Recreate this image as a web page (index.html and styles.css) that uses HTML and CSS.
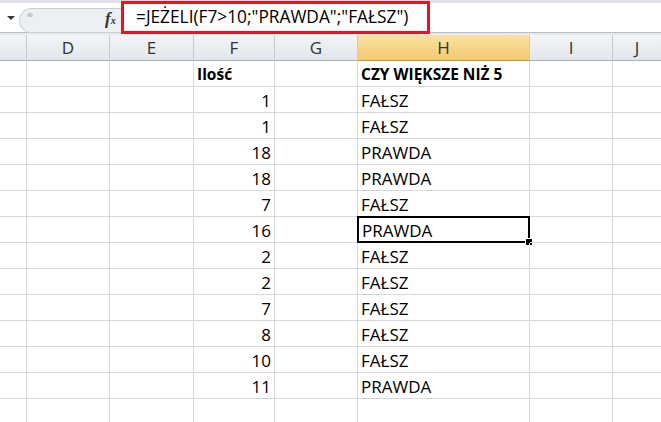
FILE: index.html
```html
<!DOCTYPE html>
<html lang="pl">
<head>
    <meta charset="UTF-8">
    <title>Arkusz</title>
    <link rel="stylesheet" href="styles.css">
</head>
<body>
    <div class="topstrip"></div>
    <div class="formulabar">
        <div class="namebox"><span class="arrow"></span></div>
        <div class="grip">
            <span class="dot"></span>
            <span class="fx"><i>f</i><small>x</small></span>
        </div>
        <div class="formula">=JEŻELI(F7&gt;10;"PRAWDA";"FAŁSZ")</div>
        <div class="rest"></div>
    </div>
    <div class="sep"></div>
    <div class="sheet" id="sheet">
        <div class="hd"></div>
        <div class="hd">D</div>
        <div class="hd">E</div>
        <div class="hd">F</div>
        <div class="hd">G</div>
        <div class="hd sel">H</div>
        <div class="hd">I</div>
        <div class="hd last">J</div>
    </div>
    <script>
        var data = [
            ["Ilość", "CZY WIĘKSZE NIŻ 5", true],
            ["1", "FAŁSZ"], ["1", "FAŁSZ"], ["18", "PRAWDA"], ["18", "PRAWDA"],
            ["7", "FAŁSZ"], ["16", "PRAWDA"], ["2", "FAŁSZ"], ["2", "FAŁSZ"],
            ["7", "FAŁSZ"], ["8", "FAŁSZ"], ["10", "FAŁSZ"], ["11", "PRAWDA"],
            ["", ""]
        ];
        var sheet = document.getElementById("sheet");
        for (var i = 0; i < data.length; i++) {
            var r = data[i];
            var cells = ["", "", "", r[0], "", r[1], "", ""];
            for (var c = 0; c < cells.length; c++) {
                var d = document.createElement("div");
                d.className = "cell";
                if (c == 7) d.className += " last";
                if (r[2]) d.className += " bold";
                else if (c == 3) d.className += " num";
                if (i == 6 && c == 5) {
                    d.className += " active";
                    var h = document.createElement("span");
                    h.className = "handle";
                    d.appendChild(h);
                }
                d.appendChild(document.createTextNode(cells[c]));
                sheet.appendChild(d);
            }
        }
    </script>
</body>
</html>
```

FILE: styles.css
```css
body {
    margin: 0;
    width: 661px;
    height: 422px;
    overflow: hidden;
    background: #fff;
    font-family: "Open Sans", "Noto Sans", sans-serif;
    color: #000;
}

.topstrip {
    height: 3px;
    background: #dfe3e8;
}

.formulabar {
    display: flex;
    height: 29px;
    background: #fff;
}

.namebox {
    width: 19px;
    display: flex;
    align-items: center;
    justify-content: center;
}

.arrow {
    width: 0;
    height: 0;
    margin-left: 3px;
    border-left: 4px solid transparent;
    border-right: 4px solid transparent;
    border-top: 4px solid #333;
}

.grip {
    position: relative;
    width: 102px;
    margin-top: 5px;
    height: 25px;
    background: #edf0f3;
    border: 1px solid #c9ced5;
    border-right: none;
    border-radius: 13px 0 0 13px;
    box-sizing: border-box;
}

.dot {
    position: absolute;
    left: 7px;
    top: 4px;
    width: 6px;
    height: 4px;
    border-radius: 3px;
    background: #c5cad1;
}

.fx {
    position: absolute;
    left: 85px;
    top: 0;
    font-family: "Liberation Serif", serif;
    font-size: 17px;
    font-weight: bold;
    color: #333;
}

.fx small {
    font-size: 10px;
    font-style: italic;
}

.formula {
    width: 309px;
    height: 33px;
    margin-top: -2px;
    border: 3px solid #e3161e;
    box-sizing: border-box;
    padding-left: 12px;
    font-size: 17.3px;
    line-height: 26px;
    white-space: nowrap;
    position: relative;
    z-index: 1;
}

.rest {
    flex: 1;
}

.sep {
    height: 3px;
    border-top: 1px solid #b9bec6;
    background: #e6e9ed;
    box-sizing: border-box;
}

.sheet {
    display: grid;
    grid-template-columns: 27px 83px 84px 81px 83px 172px 83px 1fr;
    grid-auto-rows: 26px;
}

.hd {
    height: 26px;
    background: linear-gradient(#f3f5f7, #e2e6eb);
    border-right: 1px solid #c6cbd1;
    border-bottom: 1px solid #a9b0b9;
    box-sizing: border-box;
    text-align: center;
    font-size: 17px;
    line-height: 26px;
    color: #333;
}

.hd.sel {
    background: linear-gradient(#fbe3a3, #f3c96e);
    border-bottom-color: #c29a45;
}

.hd.last, .cell.last {
    border-right: none;
}

.cell {
    position: relative;
    border-right: 1px solid #d8d8d8;
    border-bottom: 1px solid #d8d8d8;
    box-sizing: border-box;
    padding: 0 3px 0 3px;
    font-size: 17px;
    line-height: 27px;
    white-space: nowrap;
}

.bold {
    font-weight: bold;
    font-size: 15.5px;
}

.num {
    text-align: right;
}

.active {
    border: 2px solid #000;
    margin: -1px 0 0 -1px;
    padding-left: 3px;
    line-height: 25px;
}

.handle {
    position: absolute;
    right: -5px;
    bottom: -5px;
    width: 6px;
    height: 6px;
    background: #000;
    border: 1px solid #fff;
}
```
